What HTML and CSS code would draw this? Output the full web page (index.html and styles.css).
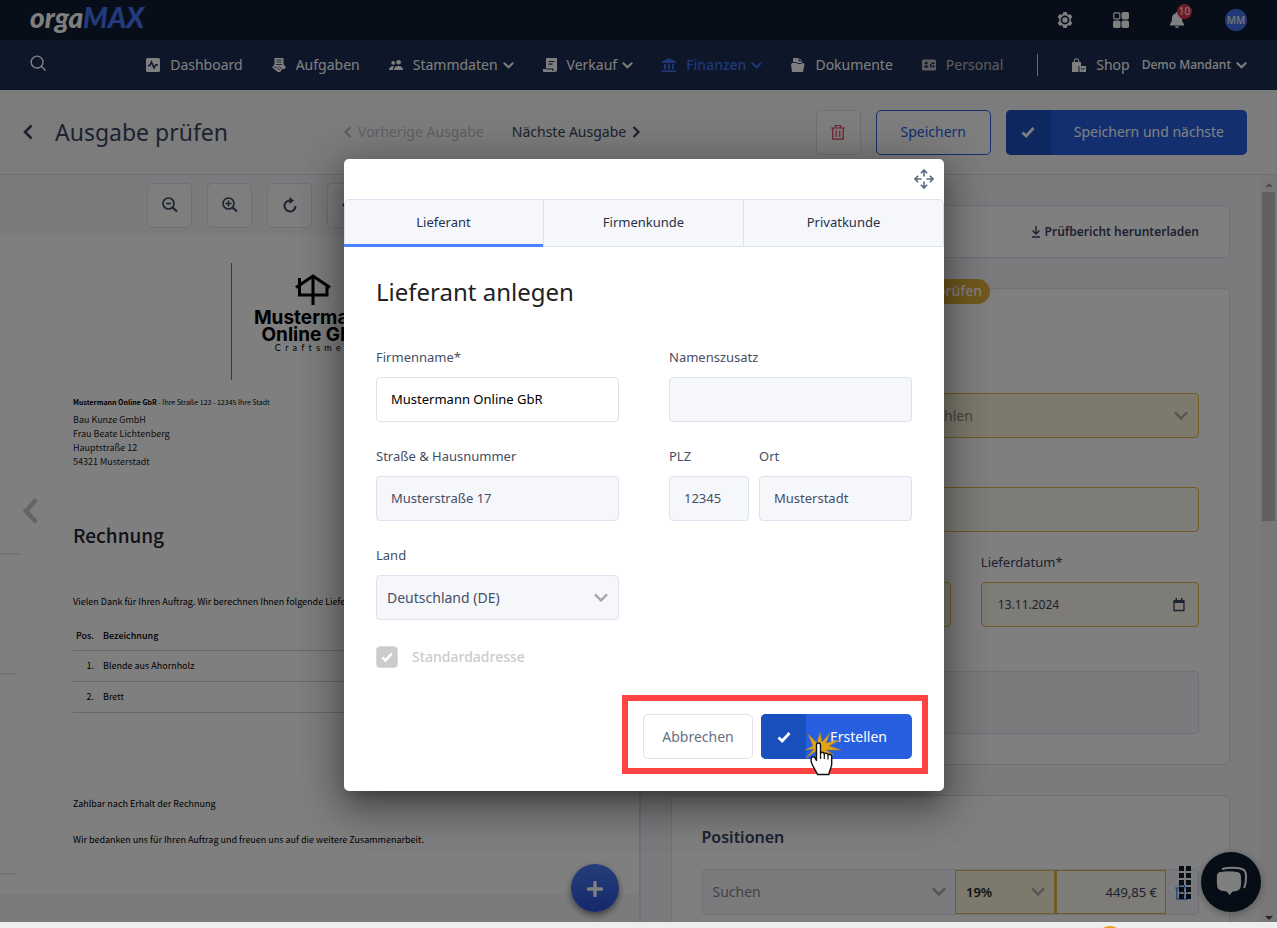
FILE: index.html
```html
<!DOCTYPE html>
<html lang="de">
<head>
<meta charset="utf-8">
<title>orgaMAX – Ausgabe prüfen</title>
<meta name="viewport" content="width=device-width, initial-scale=1">
<link rel="stylesheet" href="styles.css">
</head>
<body>
<svg class="sprite" aria-hidden="true">
  <symbol id="down" viewBox="0 0 12 12"><path d="M1.500 3.500 6 8l4.500-4.500" fill="none" stroke="currentColor" stroke-width="2.200" stroke-linecap="round"/></symbol>
  <symbol id="left" viewBox="0 0 12 12"><path d="M8.500 1 3.500 6l5 5" fill="none" stroke="currentColor" stroke-width="2.200"/></symbol>
  <symbol id="right" viewBox="0 0 12 12"><path d="M3.500 1l5 5-5 5" fill="none" stroke="currentColor" stroke-width="2.200"/></symbol>
  <symbol id="check" viewBox="0 0 14 14"><path d="M1.500 7.500 5.200 11l7.300-8" fill="none" stroke="currentColor" stroke-width="2.800"/></symbol>
  <symbol id="trash" viewBox="0 0 16 16"><path d="M1 4h14M5.500 4V1.500h5V4M2.800 4v11.200h10.400V4M6.200 6.500v6.500M9.800 6.500v6.500" fill="none" stroke="currentColor" stroke-width="1.200"/></symbol>
</svg>

<div class="app">
  <header class="topbar">
    <a class="brand" href="#" aria-label="orgaMAX">orga<span class="brand-max">MAX</span></a>
    <div class="tools">
      <button class="tool" aria-label="Einstellungen"><svg viewBox="0 0 16 16"><path fill="currentColor" fill-rule="evenodd" d="M6.300 0h3.400l.5 2.100 1.300.75 2.100-.65 1.700 2.950-1.600 1.500v2.700l1.600 1.500-1.700 2.950-2.100-.65-1.300.75-.5 2.100H6.300l-.5-2.100-1.300-.75-2.100.65L.7 10.850l1.600-1.500v-2.700L.7 5.150 2.400 2.200l2.100.65 1.300-.75zM8 3.600a4.400 4.400 0 1 0 0 8.800 4.400 4.400 0 0 0 0-8.800zM8 5.300a2.700 2.700 0 1 1 0 5.400 2.700 2.700 0 0 1 0-5.400z"/></svg></button>
      <button class="tool" aria-label="Apps"><svg viewBox="0 0 16 16" fill="currentColor"><rect x=".8" y=".8" width="6" height="6" rx="1" fill="none" stroke="currentColor" stroke-width="1.200"/><rect x="8.500" width="7.500" height="7.500" rx="1.800"/><rect y="8.500" width="7.500" height="7.500" rx="1.800"/><rect x="8.500" y="8.500" width="7.500" height="7.500" rx="1.800"/></svg></button>
      <button class="tool" aria-label="Benachrichtigungen"><svg viewBox="0 0 16 16" fill="currentColor"><path d="M8 0c.8 0 1.200.5 1.200 1.300C11.600 1.900 13 4 13 6.300c0 3.200.8 4.500 2 5.700v1.500H1V12c1.200-1.200 2-2.500 2-5.700C3 4 4.400 1.900 6.800 1.300 6.800.5 7.200 0 8 0zM6 14.300h4A2 1.700 0 0 1 6 14.300z"/></svg><span class="count">10</span></button>
      <button class="avatar">MM</button>
    </div>
  </header>

  <nav class="nav">
    <button class="search" aria-label="Suche"><svg viewBox="0 0 18 18" fill="none" stroke="currentColor" stroke-width="1.500"><circle cx="7.500" cy="7.500" r="6.300"/><path d="m12 12 4.500 4.500"/></svg></button>
    <a class="item" href="#"><svg class="ico" viewBox="0 0 14 14"><rect width="14" height="14" rx="1.500" fill="currentColor"/><path d="M2 7.500h2l1.500-3.500L8 10l1.500-3H12" fill="none" stroke="#1c2e54" stroke-width="1.500"/></svg>Dashboard</a>
    <a class="item" href="#"><svg class="ico" viewBox="0 0 14 14"><path d="M2.500 0h9v7h-9z" fill="currentColor"/><path d="M0 9l3-3 4 1 4-1 3 3-1.500 2-2 0L8 14H6l-4-3z" fill="currentColor"/><path d="M4.500 2h5M4.500 4h5M4 6.500h6M4 9l4 3M7 8l3 3M2 8l1.500 2" fill="none" stroke="#1c2e54" stroke-width=".8"/></svg>Aufgaben</a>
    <a class="item" href="#"><svg class="ico" viewBox="0 0 14 14" fill="currentColor"><circle cx="4.200" cy="4.800" r="1.900"/><circle cx="9.600" cy="4.300" r="2.300"/><path d="M0 12c0-2.500 1.600-3.800 4-3.800.5 0 .8 0 1.200.2C4.300 9.300 4 10.500 4 12zM5 12c0-2.600 1.800-4 4.500-4S14 9.400 14 12z"/></svg>Stammdaten<svg class="chev"><use href="#down"/></svg></a>
    <a class="item" href="#"><svg class="ico" viewBox="0 0 14 14"><path d="M4 0h10v12a2 2 0 0 1-2 2H1.500A1.500 1.500 0 0 1 0 12v-1h3V1a1 1 0 0 1 1-1z" fill="currentColor"/><path d="M5.500 3.500h6M5.500 6.200h4M3 11h7v2" fill="none" stroke="#1c2e54" stroke-width="1.200"/></svg>Verkauf<svg class="chev"><use href="#down"/></svg></a>
    <a class="item item-active" href="#"><svg class="ico" viewBox="0 0 14 14" fill="currentColor"><path d="M7 0l7 3.800V5H0V3.800zM2 6h2v5H2zM6 6h2v5H6zM10 6h2v5h-2zM0 12.300h14V14H0z"/></svg>Finanzen<svg class="chev"><use href="#down"/></svg></a>
    <a class="item" href="#"><svg class="ico" viewBox="0 0 14 14" fill="currentColor"><path d="M2 0h6l3 2.800V5h1.500L13.500 6 12 14H1L0 6.500 1 5h1z"/><path d="M2 4.500h3.500l1 1H11M8 0v3h3" fill="none" stroke="#1c2e54" stroke-width=".9"/></svg>Dokumente</a>
    <a class="item item-muted" href="#"><svg class="ico" viewBox="0 0 14 14"><rect y="1.500" width="14" height="11" rx="1.500" fill="currentColor"/><g fill="#1c2e54"><circle cx="4.200" cy="5.200" r="1.400"/><path d="M2 9.500c0-3 4.500-3 4.500 0zM8 6h1.500V4.500h3v1.500h-3V9.500H8zM10.500 7h2v2.500h-2z"/></g></svg>Personal</a>
    <span class="divider"></span>
    <a class="item item-shop" href="#"><svg class="ico" viewBox="0 0 14 14"><path d="M0 4h9v4H6.500v6H0z" fill="currentColor"/><path d="M2.300 5V3a2.200 2.200 0 0 1 4.400 0v2" fill="none" stroke="currentColor" stroke-width="1.100"/><path d="M7.500 8H14v6H7.500z" fill="currentColor"/><path d="M9 10l1.700 1.700L12.500 10" fill="none" stroke="#1c2e54"/></svg>Shop</a>
    <button class="item item-tenant">Demo Mandant<svg class="chev"><use href="#down"/></svg></button>
  </nav>

  <div class="pagehead">
    <button class="back" aria-label="Zurück"><svg viewBox="0 0 12 16"><path d="M9.500 1.500 3 8l6.500 6.500" fill="none" stroke="currentColor" stroke-width="2.600"/></svg></button>
    <h1 class="page-title">Ausgabe prüfen</h1>
    <div class="pager">
      <button class="pager-btn" disabled><svg class="chev"><use href="#left"/></svg>Vorherige Ausgabe</button>
      <button class="pager-btn">Nächste Ausgabe<svg class="chev"><use href="#right"/></svg></button>
    </div>
    <div class="head-actions">
      <button class="btn btn-icon btn-red" aria-label="Löschen"><svg class="i16"><use href="#trash"/></svg></button>
      <button class="btn btn-outline">Speichern</button>
      <button class="btn btn-primary"><span class="btn-mark"><svg class="i14"><use href="#check"/></svg></span><span class="btn-text">Speichern und nächste</span></button>
    </div>
  </div>

  <div class="split">
    <section class="viewer">
      <div class="viewer-tools">
        <button class="btn btn-icon" aria-label="Verkleinern"><svg class="i16" viewBox="0 0 16 16" fill="none" stroke="currentColor" stroke-width="1.600"><circle cx="6.500" cy="6.500" r="5.500"/><path d="M4 6.500h5"/><path d="m10.500 10.500 4.500 4" stroke-width="2.200"/></svg></button>
        <button class="btn btn-icon" aria-label="Vergrößern"><svg class="i16" viewBox="0 0 16 16" fill="none" stroke="currentColor" stroke-width="1.600"><circle cx="6.500" cy="6.500" r="5.500"/><path d="M3.500 6.500h6M6.500 3.500v6"/><path d="m10.500 10.500 4.500 4" stroke-width="2.200"/></svg></button>
        <button class="btn btn-icon" aria-label="Drehen"><svg class="i16" viewBox="0 0 16 16"><path d="M8.500 3.500A5.500 5.500 0 1 0 13.500 9" fill="none" stroke="currentColor" stroke-width="2"/><path d="M7.500 0l4.500 3.500L7.500 7z" fill="currentColor"/></svg></button>
        <button class="btn btn-icon" aria-label="Zurückblättern"><svg class="i16" viewBox="0 0 16 16"><path d="M15 8H3" stroke="currentColor" stroke-width="2"/><path d="M4 4 0 8l4 4z" fill="currentColor"/></svg></button>
      </div>
      <article class="doc">
        <span class="fold fold-a"></span><span class="fold fold-b"></span><span class="fold fold-c"></span>
        <button class="doc-prev" aria-label="Vorherige Seite"><svg viewBox="0 0 16 26"><path d="M13 3 4 13l9 10" fill="none" stroke="currentColor" stroke-width="4.500" stroke-linecap="round"/></svg></button>
        <div class="doc-logo">
          <svg class="house" viewBox="0 0 36 32" fill="none" stroke="#000" stroke-width="3"><path d="M1 13.500 18 2l17 11.500M4.500 4v17H32V12M18 2v29"/></svg>
          <span class="logo-name">Mustermann<br>Online GbR</span>
          <span class="logo-sub">C r a f t s m e n</span>
        </div>
        <p class="sender"><b>Mustermann Online GbR</b> - Ihre Straße 123 - 12345 Ihre Stadt</p>
        <address class="recipient">Bau Kunze GmbH<br>Frau Beate Lichtenberg<br>Hauptstraße 12<br>54321 Musterstadt</address>
        <h2 class="doc-title">Rechnung</h2>
        <p class="doc-intro">Vielen Dank für Ihren Auftrag. Wir berechnen Ihnen folgende Lieferung:</p>
        <table class="doc-table">
          <tr><th>Pos.</th><th>Bezeichnung</th></tr>
          <tr><td>1.</td><td>Blende aus Ahornholz</td></tr>
          <tr><td>2.</td><td>Brett</td></tr>
        </table>
        <p class="doc-pay">Zahlbar nach Erhalt der Rechnung</p>
        <p class="doc-thanks">Wir bedanken uns für Ihren Auftrag und freuen uns auf die weitere Zusammenarbeit.</p>
      </article>
      <button class="fab" aria-label="Hinzufügen"><svg viewBox="0 0 16 16"><path d="M8 1.500v13M1.500 8h13" stroke="currentColor" stroke-width="3.400" stroke-linecap="round"/></svg></button>
    </section>

    <section class="side">
      <div class="cards">
        <div class="card card-report">
          <a class="report" href="#"><svg class="chev" viewBox="0 0 12 12"><path d="M6 0v7.500M2.500 4.500 6 8l3.500-3.500M2 11h8" fill="none" stroke="currentColor" stroke-width="1.400"/></svg>Prüfbericht herunterladen</a>
        </div>
        <div class="card card-form">
          <span class="pill">Bitte prüfen</span>
          <div class="pick warn pick-tall"><select class="control supplier" aria-label="Lieferant"><option>Lieferant oder Kunden auswählen</option></select><svg class="pick-arrow"><use href="#down"/></svg></div>
          <input class="control warn warn-soft number" aria-label="Belegnummer">
          <div class="dates">
            <div class="date-cell date-first"><input class="control warn warn-soft" aria-label="Belegdatum"></div>
            <div class="date-cell"><label class="label" for="liefer">Lieferdatum*</label>
              <div class="date-field warn warn-soft"><input class="date-input" id="liefer" value="13.11.2024"><svg viewBox="0 0 12 14" class="cal"><path d="M1 3h10v9.500H1z" fill="none" stroke="currentColor" stroke-width="1.300"/><path d="M1 2h10v3H1zM2.500 0h1.500v2H2.500zM8 0h1.500v2H8z" fill="currentColor"/></svg></div></div>
          </div>
          <textarea class="control note" aria-label="Notiz"></textarea>
        </div>
        <div class="card card-positions">
          <h2 class="card-title">Positionen</h2>
          <div class="posrow">
            <div class="cell cell-search"><input class="cell-input" placeholder="Suchen" aria-label="Suchen"><svg class="cell-arrow"><use href="#down"/></svg></div>
            <div class="cell cell-warn cell-tax"><select class="cell-input cell-bold" aria-label="Steuersatz"><option>19%</option></select><svg class="cell-arrow"><use href="#down"/></svg></div>
            <div class="cell cell-warn cell-sum"><input class="cell-input cell-right" value="449,85 €" aria-label="Betrag"></div>
            <button class="cell cell-del" aria-label="Position löschen"><svg class="i16"><use href="#trash"/></svg></button>
          </div>
        </div>
      </div>
      <div class="scroll" aria-hidden="true"><svg class="scroll-arrow" viewBox="0 0 8 5"><path d="M0 5l4-4 4 4z" fill="#a0a0a0"/></svg><span class="thumb"></span><svg class="scroll-arrow scroll-down" viewBox="0 0 8 5"><path d="M0 0h8L4 4z" fill="#505050"/></svg></div>
    </section>
  </div>

  <svg class="grip" viewBox="0 0 12 34" fill="#0d1a2e" aria-hidden="true"><path d="M0 0h5v5H0zM7 0h5v5H7zM0 7h5v5H0zM7 7h5v5H7zM0 14h5v5H0zM7 14h5v5H7zM0 21h5v5H0zM7 21h5v5H7zM0 28h5v5H0zM7 28h5v5H7z"/></svg>
  <button class="chat" aria-label="Chat"><svg viewBox="0 0 34 34"><path d="M8 4c6-1.600 15-1.600 20 0 3 1 4 3 4 7 0 5-.3 9-2 12" fill="none" stroke="#fff" stroke-width="2"/><path d="M6 6.500c6-1.200 12-1.200 17.500 0 2.500.6 3.600 2 4 4.500.5 4 .5 8-.3 11.500-.5 2.200-1.500 3.300-3.700 3.800-1.800.4-3 .6-4.500.8L15.500 31 12.500 27c-2-.1-4-.3-6-.8-2-.5-3.200-1.600-3.700-3.700C2 19 2 15 2.300 11c.2-2.500 1.400-4 3.700-4.500z" fill="#fff" stroke="#0d1a2e" stroke-width="1.200"/></svg></button>

  <div class="overlay">
    <div class="modal" role="dialog" aria-labelledby="modal-title">
      <div class="modal-bar"><button class="move" aria-label="Verschieben"><svg viewBox="0 0 20 20" fill="none" stroke="currentColor" stroke-width="1.600"><path d="M10 7.500V1M6.800 4.200 10 1l3.200 3.200M10 12.500V19M6.800 15.800 10 19l3.200-3.200M7.500 10H1M4.200 6.800 1 10l3.200 3.200M12.500 10H19M15.800 6.800 19 10l-3.200 3.200"/></svg></button></div>
      <div class="tabs" role="tablist">
        <button class="tab tab-active" role="tab">Lieferant</button><button class="tab" role="tab">Firmenkunde</button><button class="tab" role="tab">Privatkunde</button>
      </div>
      <form class="form">
        <h2 class="modal-title" id="modal-title">Lieferant anlegen</h2>
        <div class="grid">
          <div class="field"><label class="label" for="firma">Firmenname*</label><input class="control control-white" id="firma" value="Mustermann Online GbR"></div>
          <div class="field"><label class="label" for="zusatz">Namenszusatz</label><input class="control" id="zusatz"></div>
          <div class="field"><label class="label" for="str">Straße &amp; Hausnummer</label><input class="control" id="str" value="Musterstraße 17"></div>
          <div class="pair">
            <div class="field"><label class="label" for="plz">PLZ</label><input class="control" id="plz" value="12345"></div>
            <div class="field"><label class="label" for="ort">Ort</label><input class="control" id="ort" value="Musterstadt"></div>
          </div>
          <div class="field"><label class="label" for="land">Land</label><div class="pick"><select class="control" id="land"><option>Deutschland (DE)</option></select><svg class="pick-arrow"><use href="#down"/></svg></div></div>
        </div>
        <label class="check"><span class="check-wrap"><input class="check-box" type="checkbox" checked disabled><svg class="check-mark"><use href="#check"/></svg></span>Standardadresse</label>
        <div class="actions">
          <button class="btn btn-cancel" type="button">Abbrechen</button>
          <button class="btn btn-primary btn-create" type="button"><span class="btn-mark"><svg class="i14"><use href="#check"/></svg></span><span class="btn-text">Erstellen</span></button>
          <span class="frame"></span>
          <svg class="pointer" viewBox="0 0 38 46" aria-hidden="true">
            <path d="M4 3l9 9 3-11 2 10 8-9-4 10 14-3-11 6 12 4-15 0 8 5-12-2-3 7-3-9L2 27l8-9-9 1 8-4z" fill="#e2a414" stroke="#9a7a35" stroke-width=".6"/>
            <path d="M12.500 14c0-2.600 4-2.600 4 0v8.500c.5-2 3.500-1.500 3.800.5.700-1.500 3.300-1 3.700.8 1-1 3.700-.5 3.700 2V33c0 4-2.700 6-2.700 10.500H13.500C12 39 7 34 7 29c0-3 2.500-4.500 4-2l1.500 2.500z" fill="#fff" stroke="#111" stroke-width="1.400" stroke-linejoin="round"/>
            <path d="M16.500 22v6M20.300 22.500V28M24 24v4.500" stroke="#111" stroke-width="1.200"/>
          </svg>
        </div>
      </form>
    </div>
  </div>
</div>
<div class="strip"><span class="strip-dot"></span></div>
</body>
</html>
```
FILE: styles.css
```css
* { box-sizing: border-box; }
body { margin: 0; min-height: 100vh; display: flex; flex-direction: column; font: 14px/20px "Noto Sans", sans-serif; color: #3a4560; background: #eee; }
button, input, select, textarea { font: inherit; color: inherit; }
button { padding: 0; border: 0; background: none; }
a { color: inherit; text-decoration: none; }
h1, h2, p { margin: 0; font-weight: 400; }
.sprite { position: absolute; width: 0; height: 0; }
.app { position: relative; height: calc(100vh - 6px); display: flex; flex-direction: column; overflow: hidden; background: #f6f7fb; }

.topbar { flex: none; height: 40px; padding: 0 30px; display: flex; align-items: center; justify-content: space-between; background: #101d33; color: #fff; }
.brand { padding-bottom: 6px; font: italic 900 28px/34px Lato, sans-serif; }
.brand-max { color: #4577f5; }
.tools { display: flex; align-items: center; gap: 40px; }
.tool { position: relative; width: 16px; height: 16px; }
.tool svg { display: block; width: 16px; height: 16px; }
.count { position: absolute; left: 8px; top: -8px; width: 15px; height: 15px; border-radius: 8px; background: #e0364c; font-size: 10px; line-height: 15px; text-align: center; }
.avatar { width: 22px; height: 22px; border-radius: 11px; background: #4070ee; font-size: 10px; line-height: 22px; font-weight: 600; color: #e4e4e4; }

.nav { flex: none; height: 50px; padding: 0 30px; display: flex; align-items: center; gap: 29px; background: #1c2e54; color: #fff; }
.search { width: 18px; height: 24px; margin: 0 auto 6px 0; }
.search svg { display: block; width: 17px; height: 17px; margin-top: 3px; }
.item { display: flex; align-items: center; white-space: nowrap; }
.ico { width: 14px; height: 14px; margin-right: 10px; }
.chev { flex: none; width: 12px; height: 12px; }
.item .chev { width: 11px; height: 11px; margin-left: 5px; }
.item-active { color: #3c6ef0; font-weight: 500; }
.item-muted { color: #bbb; }
.divider { width: 1px; height: 22px; margin: 0 5px; background: #fff; opacity: .8; }
.item-tenant { margin-left: -17px; font-size: 12px; font-weight: 500; }

.pagehead { flex: none; height: 85px; padding: 0 30px 0 22px; display: flex; align-items: center; background: #f9f9f9; border-bottom: 1px solid #dfe1ee; }
.back { width: 12px; height: 16px; margin-right: 21px; }
.back svg { display: block; width: 12px; height: 16px; }
.page-title { font-size: 23px; line-height: 32px; white-space: nowrap; }
.pager { display: flex; gap: 28px; margin-left: 114px; white-space: nowrap; }
.pager-btn { display: flex; align-items: center; gap: 4px; }
.pager-btn:disabled { color: #bfbfc4; }
.head-actions { margin-left: auto; display: flex; gap: 15px; white-space: nowrap; }

.btn { height: 45px; display: flex; align-items: center; justify-content: center; border: 1px solid #dfe1ee; border-radius: 5px; background: #fdfdfd; }
.btn-icon { width: 45px; }
.btn-red { color: #e03a56; }
.btn-outline { min-width: 115px; border-color: #275fe0; color: #275fe0; }
.btn-primary { border: 0; background: #275fe0; color: #fff; overflow: hidden; }
.btn-mark { width: 45px; height: 45px; display: flex; align-items: center; justify-content: center; background: #1a4fbe; }
.btn-text { padding: 0 23px; }
.btn-create .btn-text { padding: 0 25px 0 24px; }
.i14 { width: 14px; height: 14px; }
.i16 { flex: none; width: 16px; height: 16px; }

.split { flex: 1; min-height: 0; display: flex; }
.viewer { position: relative; flex: 1; border-right: 2px solid #dfe1ee; }
.viewer-tools { height: 60px; padding-left: 147px; display: flex; align-items: center; gap: 15px; }
.doc { position: relative; height: calc(100% - 88px); padding: 28px 40px 0 73px; background: #fff; color: #000; font: 9px/14px "Noto Sans CJK SC", sans-serif; overflow: hidden; }
.fold { position: absolute; left: 0; width: 16px; height: 2px; background: #e6e6e6; }
.fold-a { top: 318px; width: 21px; }
.fold-b { top: 438px; }
.fold-c { top: 638px; }
.doc-prev { position: absolute; left: 22px; top: 263px; width: 16px; height: 26px; color: #c8c8c8; }
.doc-prev svg { display: block; width: 16px; height: 26px; }
.doc-logo { height: 117px; width: 163px; margin-left: 158px; padding-top: 11px; border-left: 1px solid #777; display: flex; flex-direction: column; align-items: center; text-align: center; }
.house { flex: none; width: 36px; height: 32px; }
.logo-name { font: 700 19px/17px Inter, sans-serif; padding-top: 3px; }
.logo-sub { font: 9px/10px Lato, sans-serif; letter-spacing: 1px; }
.sender { margin-top: 16px; font-size: 7px; line-height: 12px; }
.recipient { margin-top: 5px; font-style: normal; color: #222; }
.doc-title { margin-top: 54px; font-size: 19px; line-height: 24px; font-weight: 500; color: #1d2530; }
.doc-intro { margin-top: 48px; }
.doc-table { width: 100%; margin-top: 13px; border-collapse: collapse; }
.doc-table tr { height: 31px; border-bottom: 1px solid #d0d0d0; text-align: left; }
.doc-table tr:first-child { height: 28px; }
.doc-table th { font-weight: 500; }
.doc-table td, .doc-table th { padding: 0 9px 0 0; }
.doc-table td:first-child, .doc-table th:first-child { width: 30px; text-align: right; }
.doc-pay { margin-top: 84px; }
.doc-thanks { margin-top: 22px; }
.fab { position: absolute; right: 20px; bottom: 10px; width: 48px; height: 48px; border-radius: 24px; background: linear-gradient(#4a7ef5, #2a50d8); box-shadow: 0 3px 6px rgba(0,0,0,.5); color: #fff; }
.fab svg { width: 16px; height: 16px; vertical-align: middle; }

.side { flex: none; width: calc(50% - 2px); display: flex; overflow: hidden; }
.cards { flex: 1; padding: 30px; display: flex; flex-direction: column; gap: 30px; }
.card { position: relative; flex: none; padding: 0 30px; background: #fff; border: 1px solid #dfe1ee; border-radius: 5px; }
.card-report { height: 53px; display: flex; align-items: center; justify-content: flex-end; }
.report { display: flex; align-items: center; gap: 3px; font-size: 12px; font-weight: 600; }
.card-form { height: 477px; padding-top: 104px; }
.pill { position: absolute; right: 239px; top: -10px; height: 25px; padding: 0 8px; border-radius: 13px; background: #e2b23c; color: #fff; line-height: 24px; font-weight: 500; }
.control { display: block; width: 100%; height: 45px; padding: 0 14px 2px; border: 1px solid #dde2ee; border-radius: 4px; background: #f6f7fb; font-size: 13px; appearance: none; outline: 0; }
.control-white { background: #fff; color: #000; }
.warn, .warn .control { border-color: #e5b545; background: #faf5da; }
.warn-soft { background: #fdf9ee; }
.pick { position: relative; border-radius: 4px; }
.pick .control { padding: 0 10px; font-size: 14px; }
.pick .supplier { padding-left: 48px; color: #8a8a8a; }
.pick-arrow { position: absolute; right: 11px; top: 16px; width: 14px; height: 14px; color: #aaa; }
.number { margin-top: 49px; }
.dates { display: grid; grid-template-columns: minmax(0, 8fr) minmax(0, 7fr); gap: 30px; margin-top: 20px; }
.date-first { padding-top: 30px; }
.date-field { height: 45px; display: flex; align-items: center; padding: 0 13px 0 16px; border: 1px solid #e5b545; border-radius: 4px; }
.date-input { flex: 1; min-width: 0; padding: 0; border: 0; background: none; font-size: 12px; outline: 0; }
.cal { width: 12px; height: 14px; }
.note { height: 63px; margin-top: 44px; resize: none; }
.card-positions { padding-top: 29px; height: 300px; }
.card-title { font-size: 16px; line-height: 24px; font-weight: 600; }
.posrow { display: flex; height: 46px; margin-top: 20px; border: 1px solid #dde2ee; border-radius: 4px; background: #f6f7fb; }
.cell { display: flex; align-items: center; padding: 0 9px 0 10px; }
.cell-search { flex: 1; min-width: 0; }
.cell-warn { border: 1px solid #e5b545; background: #faf5da; }
.cell-tax { width: 100px; }
.cell-sum { width: 111px; padding-right: 8px; border-left-width: 2px; background: #fdf9ee; }
.cell-del { width: 32px; padding: 0; justify-content: center; color: #2f86f5; }
.cell-input { flex: 1; width: 20px; min-width: 0; padding: 0; border: 0; background: none; appearance: none; outline: 0; font-size: 13px; }
.cell-input::placeholder { color: #858585; opacity: 1; font-size: 14px; }
.cell-bold { font-weight: 600; color: #222; }
.cell-right { text-align: right; }
.cell-arrow { flex: none; width: 14px; height: 14px; color: #aaa; }
.scroll { flex: none; width: 17px; display: flex; flex-direction: column; align-items: center; background: #f1f1f1; }
.scroll-arrow { width: 8px; height: 5px; margin: 7px 0 5px; }
.scroll-down { margin: auto 0 1px; }
.thumb { width: 13px; height: 44%; background: #c1c1c1; }

.grip { position: absolute; right: 86px; bottom: 22px; width: 12px; height: 34px; }
.chat { position: absolute; right: 16px; bottom: 10px; width: 60px; height: 60px; border-radius: 30px; background: #0d1a2e; box-shadow: 0 2px 8px rgba(0,0,0,.3); }
.chat svg { width: 34px; height: 34px; vertical-align: middle; }

.overlay { position: absolute; inset: 0; display: flex; justify-content: center; align-items: flex-start; padding: 159px 0 0 11px; background: rgba(0,0,0,.5); }
.modal { width: 600px; border-radius: 5px; background: #fff; box-shadow: 0 11px 15px -7px rgba(0,0,0,.3), 0 16px 38px 3px rgba(0,0,0,.25), 0 9px 46px 8px rgba(0,0,0,.2); color: #454e66; }
.modal-bar { height: 40px; padding: 0 10px; display: flex; align-items: center; justify-content: flex-end; }
.move { width: 20px; height: 20px; color: #5c6880; }
.move svg { display: block; width: 20px; height: 20px; }
.tabs { display: flex; height: 48px; border: 1px solid #dde2ee; border-radius: 5px 5px 0 0; background: #f6f7fb; }
.tab { flex: 1; margin-bottom: -1px; padding-bottom: 3px; font-size: 13px; color: #26304a; }
.tab + .tab { border-left: 1px solid #dde2ee; }
.tab-active { margin-left: -1px; padding-bottom: 0; border-bottom: 3px solid #4a82ff; }
.form { padding: 29px 32px 32px; }
.modal-title { font-size: 24px; line-height: 32px; color: #222; }
.grid { margin-top: 39px; display: grid; grid-template-columns: 1fr 1fr; gap: 24px 50px; }
.label { display: block; margin-bottom: 10px; font-size: 13px; line-height: 20px; }
.pair { display: grid; grid-template-columns: 80px 1fr; gap: 10px; }
.check { margin-top: 26px; display: flex; align-items: center; gap: 14px; font-weight: 500; color: #ccc; }
.check-wrap { position: relative; width: 22px; height: 22px; }
.check-box { display: block; width: 22px; height: 22px; margin: 0; appearance: none; border: 1px solid #d5dae6; border-radius: 4px; background: #ccc; }
.check-mark { position: absolute; left: 5px; top: 5px; width: 12px; height: 12px; color: #fff; }
.actions { position: relative; margin-top: 46px; display: flex; justify-content: flex-end; gap: 8px; }
.btn-cancel { width: 110px; background: #fff; color: #66707f; }
.frame { position: absolute; top: -19px; bottom: -15px; right: -16px; width: 306px; border: 6px solid #ff4343; pointer-events: none; }
.pointer { position: absolute; right: 70px; top: 17px; width: 38px; height: 46px; pointer-events: none; }

.strip { position: relative; height: 6px; overflow: hidden; background: #eee; }
.strip-dot { position: absolute; right: 154px; top: 4px; width: 26px; height: 26px; border-radius: 13px; background: #f09a28; }
```
